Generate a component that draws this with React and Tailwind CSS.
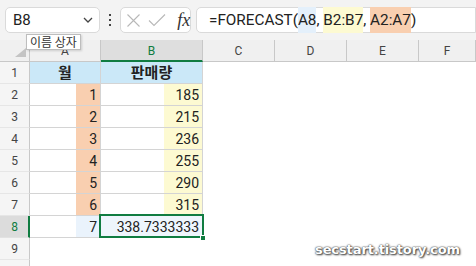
import React from 'react';

const data = [
  [1, 185],
  [2, 215],
  [3, 236],
  [4, 255],
  [5, 290],
  [6, 315],
];

const cols = ['C', 'D', 'E', 'F'];

const NameBox = () => (
  <div className="w-[100px] h-[26px] bg-white border border-[#dadada] rounded-[5px] flex items-center justify-between pl-[7px] pr-[6px]">
    <span className="text-[15px] text-[#222]">B8</span>
    <svg width="10" height="6" viewBox="0 0 10 6">
      <polyline points="1,1 5,5 9,1" fill="none" stroke="#444" strokeWidth="1.3" />
    </svg>
  </div>
);

const FxBox = () => (
  <div className="w-[72px] h-[26px] bg-white border border-[#dadada] rounded-[5px] flex items-center pl-[6px]">
    <svg width="13" height="13" viewBox="0 0 13 13">
      <path d="M0.5 0.5 L12.5 12.5 M12.5 0.5 L0.5 12.5" stroke="#b8b8b8" strokeWidth="1.1" />
    </svg>
    <svg width="18" height="13" viewBox="0 0 18 13" className="ml-[8px]">
      <polyline points="1,6.5 6,11.5 17,0.5" fill="none" stroke="#b8b8b8" strokeWidth="1.1" />
    </svg>
    <span className="ml-[11px] text-[18px] italic text-[#333] font-['Liberation_Serif',serif] leading-none">fx</span>
  </div>
);

const FormulaBox = () => (
  <div className="w-[280px] h-[26px] bg-white border border-[#dadada] rounded-l-[5px] flex items-center pl-[12px] text-[15.3px] text-[#222] whitespace-pre shrink-0">
    <span>=FORECAST(</span>
    <span className="bg-[#e4f0fb] h-[26px] leading-[26px]">A8</span>
    <span>, </span>
    <span className="bg-[#fdfad2] h-[26px] leading-[26px]">B2:B7</span>
    <span>, </span>
    <span className="bg-[#f9cfb0] h-[26px] leading-[26px]">A2:A7</span>
    <span>)</span>
  </div>
);

const Toolbar = () => (
  <div className="h-[40px] bg-[#f3f3f3] flex items-start pt-[7px] pl-[5px]">
    <NameBox />
    <div className="w-[22px] h-[26px] flex flex-col items-center justify-center gap-[3px]">
      <span className="w-[2px] h-[2px] bg-[#444]" />
      <span className="w-[2px] h-[2px] bg-[#444]" />
      <span className="w-[2px] h-[2px] bg-[#444]" />
    </div>
    <FxBox />
    <div className="w-[5px]" />
    <FormulaBox />
  </div>
);

const HeaderRow = () => (
  <>
    <div className="h-[22px] bg-[#f0f0f0] border-r border-b border-[#c8c8c8] flex items-end justify-end pr-[3px] pb-[4px]">
      <svg width="11" height="9" viewBox="0 0 11 9">
        <polygon points="11,0 11,9 0,9" fill="#c4c4c4" />
      </svg>
    </div>
    <div className="h-[22px] bg-[#f0f0f0] border-r border-b border-[#c8c8c8] flex items-center justify-center text-[12px] text-[#444]">A</div>
    <div className="h-[22px] bg-[#dedede] border-r border-[#c8c8c8] border-b-2 border-b-[#107c41] flex items-center justify-center text-[12px] text-[#107c41] pt-[1px]">B</div>
    {cols.map((c) => (
      <div key={c} className="h-[22px] bg-[#f0f0f0] border-r border-b border-[#c8c8c8] flex items-center justify-center text-[12px] text-[#444]">{c}</div>
    ))}
  </>
);

const RowHead = ({ n, active }) =>
  active ? (
    <div className="h-[22px] bg-[#dcdcdc] border-r-2 border-r-[#107c41] border-b border-b-[#e2e2e2] flex items-center justify-center text-[12px] text-[#107c41] pl-[1px]">{n}</div>
  ) : (
    <div className="h-[22px] bg-[#f5f5f5] border-r border-r-[#c8c8c8] border-b border-b-[#e6e6e6] flex items-center justify-center text-[12px] text-[#444]">{n}</div>
  );

const Blank = () => (
  <>
    <div className="h-[22px]" />
    <div className="h-[22px]" />
    <div className="h-[22px]" />
    <div className="h-[22px]" />
  </>
);

const App = () => {
  return (
    <div className="w-[476px] h-[266px] overflow-hidden bg-white relative font-['Roboto','Noto_Sans_CJK_KR',sans-serif]">
      <Toolbar />
      <div className="grid grid-cols-[30px_71px_102px_72px_72px_72px_57px]">
        <HeaderRow />

        <RowHead n={1} />
        <div className="h-[22px] bg-[#cbe8f8] border-r border-b border-[#d4d4d4] flex items-center justify-center text-[15px] font-bold text-[#222] font-['Noto_Sans_CJK_KR',sans-serif]">월</div>
        <div className="h-[22px] bg-[#cbe8f8] border-r border-b border-[#d4d4d4] flex items-center justify-center text-[15px] font-bold text-[#222] font-['Noto_Sans_CJK_KR',sans-serif]">판매량</div>
        <Blank />

        {data.map(([m, v], i) => (
          <React.Fragment key={m}>
            <RowHead n={i + 2} />
            <div className="h-[22px] border-r border-b border-[#d4d4d4] flex justify-end">
              <span className="w-[24px] h-full bg-[#f9cfb0] text-right pr-[3px] text-[14px] leading-[22px] text-[#222]">{m}</span>
            </div>
            <div className="h-[22px] border-r border-b border-[#d4d4d4] flex justify-end">
              <span className="w-[38px] h-full bg-[#fdfad2] text-right pr-[3px] text-[14px] leading-[22px] text-[#222]">{v}</span>
            </div>
            <Blank />
          </React.Fragment>
        ))}

        <RowHead n={8} active />
        <div className="h-[22px] border-r border-b border-[#d4d4d4] flex justify-end">
          <span className="w-[24px] h-full bg-[#eaf3fc] text-right pr-[3px] text-[14px] leading-[22px] text-[#222]">7</span>
        </div>
        <div className="h-[22px] border-r border-b border-[#d4d4d4] bg-[#eef5fc] relative text-right pr-[3px] text-[14px] leading-[22px] text-[#222]">
          338.7333333
          <div className="absolute -left-[2px] -top-[2px] -right-[2px] -bottom-[1px] border-2 border-[#107c41]" />
          <div className="absolute -right-[4px] -bottom-[4px] w-[6px] h-[6px] bg-[#107c41] border border-white" />
        </div>
        <Blank />

        <RowHead n={9} />
        <div className="h-[22px]" />
        <div className="h-[22px]" />
        <Blank />

        <RowHead n="" />
      </div>

      <div className="absolute left-[26px] top-[34px] h-[16px] px-[3px] bg-white border border-[#bdbdbd] shadow-[1px_1px_2px_rgba(0,0,0,0.15)] text-[12px] leading-[14px] text-[#333] font-['Noto_Sans_CJK_KR',sans-serif]">
        이름 상자
      </div>

      <div className="absolute left-[315px] top-[240px] text-[13px] font-bold text-white tracking-[-0.1px] font-['DejaVu_Sans',sans-serif] [text-shadow:0_0_1px_#444,0_0_2px_#555,1px_1px_2px_#333]">
        secstart.tistory.com
      </div>
    </div>
  );
};

export default App;
